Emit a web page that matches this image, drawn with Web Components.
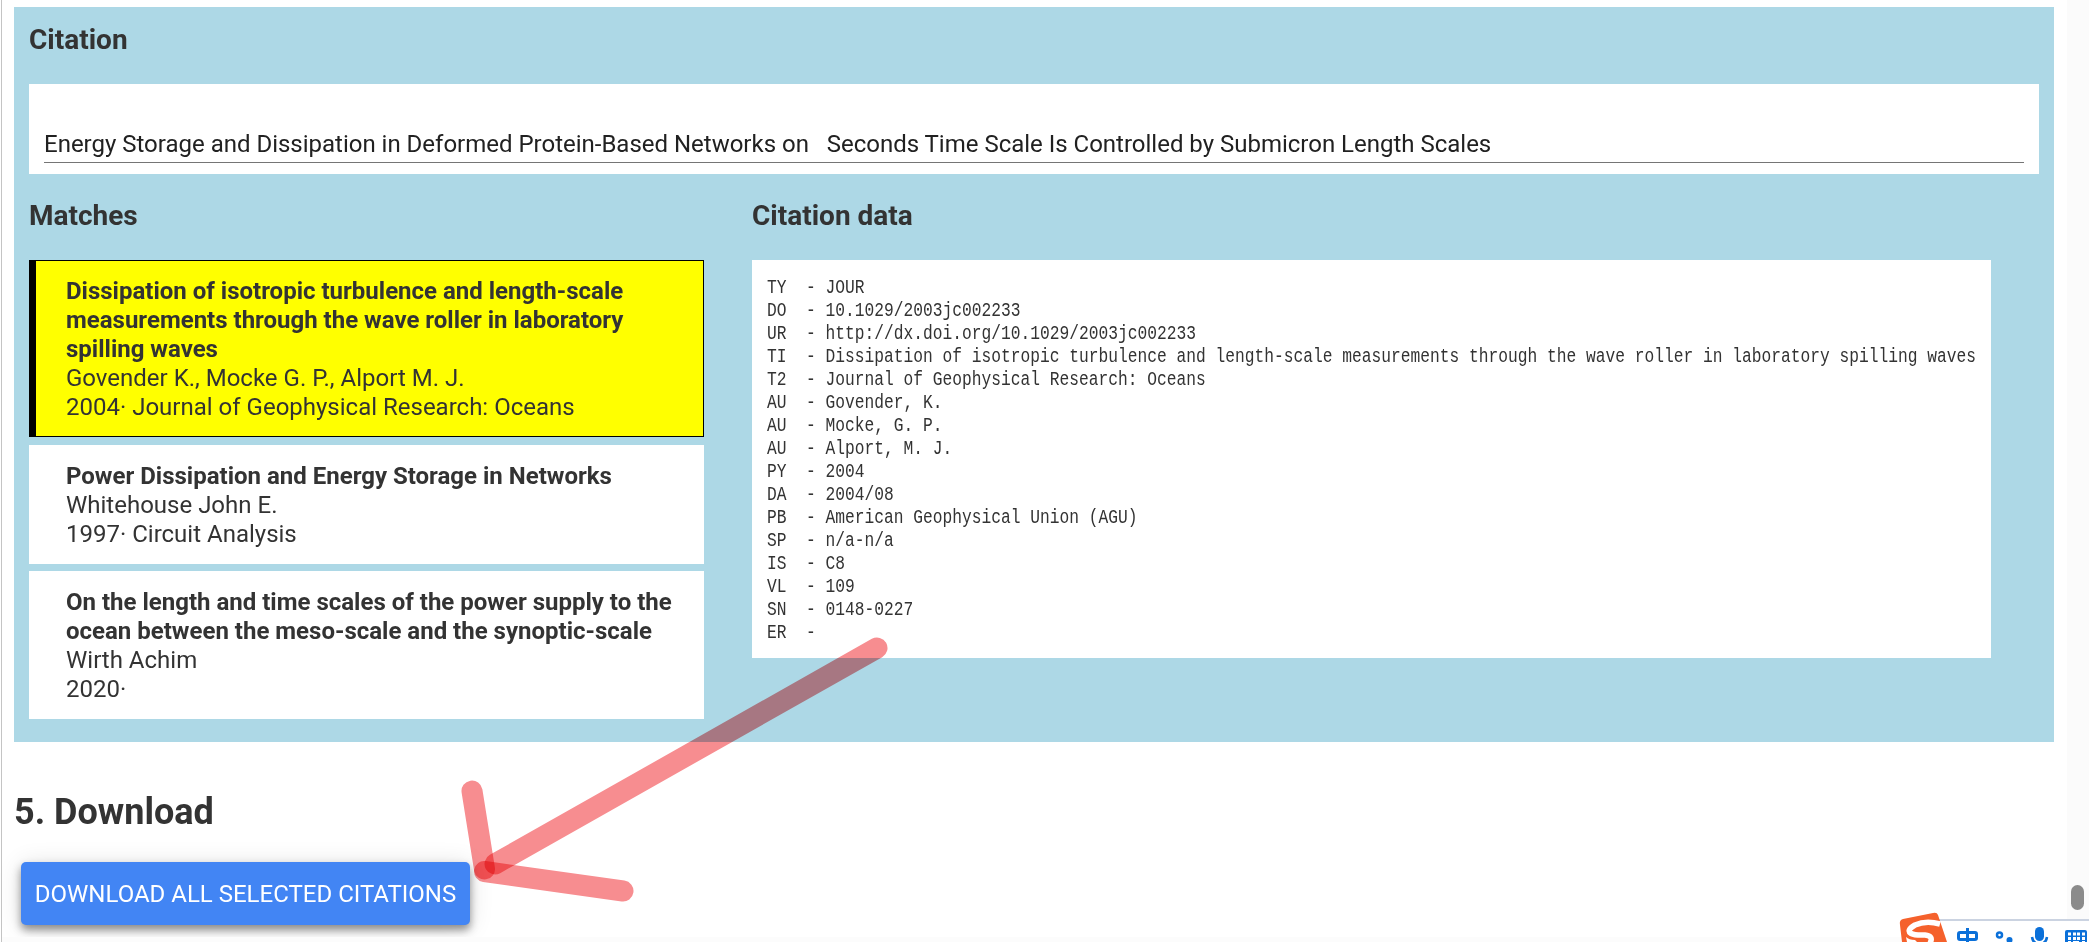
<!DOCTYPE html>
<html lang="en">
<head>
<meta charset="utf-8">
<title>Citations</title>
<style>
html,body{margin:0;height:100%;overflow:hidden;background:#fff}
body{font-family:Roboto,"Liberation Sans",sans-serif;font-size:24px;line-height:29px;color:#333}
</style>
</head>
<body>
<citation-app></citation-app>
<script>
const define = (name, html) => customElements.define(name, class extends HTMLElement {
  constructor() {
    super();
    const t = document.createElement('template');
    t.innerHTML = html;
    this.attachShadow({mode: 'open'}).append(t.content.cloneNode(true));
  }
});

define('section-title', `
<style>:host{display:block;box-sizing:border-box;padding-top:1px;font-size:28px;line-height:34px;font-weight:700}</style><slot></slot>`);

define('citation-input', `
<style>
:host{display:flex;flex-direction:column;justify-content:flex-end;box-sizing:border-box;height:90px;background:#fff;padding:0 15px 11px}
div{border-bottom:1px solid #757575;color:#212121;white-space:pre;height:33px;line-height:31px;letter-spacing:-.008px}
</style><div><slot></slot></div>`);

define('match-card', `
<style>
:host{display:block;box-sizing:border-box;background:#fff;border:1px solid #fff;border-left-width:7px;padding:16px 15px 14px 30px}
:host([selected]){background:#ff0;border-color:#000}
.title{font-weight:700}
</style>
<div class="title"><slot name="title"></slot></div>
<div><slot name="authors"></slot></div>
<div><slot name="source"></slot></div>`);

define('ris-record', `
<style>
:host{display:block;box-sizing:border-box;width:1239px;height:398px;background:#fff;padding:17px 15px 13px;overflow:hidden}
pre{margin:0;font:19.5px/23px "Liberation Mono",monospace;transform:scaleX(.8332);transform-origin:0 0;color:#333}
</style><pre><slot></slot></pre>`);

define('download-button', `
<style>
:host{display:block;margin:30px 0 0 7px;width:449px;height:63px;box-sizing:border-box;background:#4285f4;color:#fff;border-radius:5px;text-align:center;line-height:65px;white-space:nowrap;
box-shadow:0 5px 8px rgba(0,0,0,.42),0 2px 24px rgba(0,0,0,.12)}
</style><slot></slot>`);

define('arrow-mark', `
<style>
:host{display:block;position:absolute;left:450px;top:620px;width:460px;height:300px;mix-blend-mode:multiply;pointer-events:none}
svg{display:block}
line{stroke:#f78d90;stroke-width:21;stroke-linecap:round;mix-blend-mode:multiply}
</style>
<svg width="460" height="300" viewBox="450 620 460 300">
<line x1="877" y1="648" x2="495" y2="864"/>
<line x1="472" y1="791" x2="484.5" y2="869"/>
<line x1="484.5" y1="871.5" x2="623" y2="891"/>
</svg>`);

define('page-scrollbar', `
<style>
:host{display:block;position:absolute;right:0;top:0;width:22px;height:100%;background:#fbfbfb}
i{position:absolute;left:4px;top:885px;width:13px;height:25px;border-radius:7px;background:#8b8b8b}
</style><i></i>`);

define('input-toolbar', `
<style>:host{display:block;position:absolute;right:0;bottom:0;width:194px;height:40px}svg{display:block}</style>
<svg width="194" height="40" viewBox="1895 902 194 40">
<path d="M1938 919h151v23h-151z" fill="#fff"/><path d="M1938 919h151v2h-151z" fill="#cbd3e1"/>
<path d="M1903 919l30-6q4-1 5 2l9 27h-45l-2-17q-1-5 3-6z" fill="#f5612c"/>
<path d="M1940 924Q1926 920 1915 925Q1906 930 1911 933.500Q1915 935.500 1925 935Q1934 936 1930 943" fill="none" stroke="#fff" stroke-width="5.500"/>
<path d="M1906 937q3 3 9 3l2 2h-10z" fill="#fff"/>
<g fill="none" stroke="#0b70d9" stroke-width="3"><rect x="1958.500" y="932.500" width="18" height="7" rx="1.500"/><path d="M1967.500 928v14"/><circle cx="1999.500" cy="935" r="2.500" stroke-width="2.500"/><path d="M2032 937q1 7 7.500 7t7.500-7" stroke-width="2.500"/></g>
<circle cx="2009.500" cy="940" r="3" fill="#0b70d9"/><rect x="2035" y="927" width="9" height="14" rx="4.500" fill="#0b70d9"/>
<rect x="2065" y="930" width="22" height="16" rx="2" fill="#0b70d9"/>
<path d="M2068 932.500h3v3h-3zM2073 932.500h3v3h-3zM2077 932.500h3v3h-3zM2082 932.500h3v3h-3zM2068 937h3v3h-3zM2073 937h3v3h-3zM2077 937h3v3h-3zM2082 937h3v3h-3zM2068 941h3v1h-3zM2073 941h6v1h-6zM2082 941h3v1h-3z" fill="#fff"/>
</svg>`);

define('citation-app', `
<style>
:host{display:block;position:relative;box-sizing:border-box;height:942px;padding:7px 35px 0 14px;overflow:hidden;background:#fff}
:host::before{content:"";position:absolute;left:1px;top:0;width:1px;height:100%;background:#c4c4c4}
.panel{box-sizing:border-box;height:735px;background:#add8e6;padding:15px}
.panel>section-title{height:62px}
.cols{display:grid;grid-template-columns:675px 1239px;column-gap:48px;margin-top:24px}
.cols section-title{height:62px}
.list{display:flex;flex-direction:column;gap:7px}
.list match-card:first-child{margin-bottom:1px}
h2{margin:50px 0 0;font-size:36px;line-height:40px;font-weight:700}
footer{position:absolute;left:2px;right:0;bottom:0;height:5px;background:#fcfcfc}
</style>
<div class="panel">
<section-title>Citation</section-title>
<citation-input>Energy Storage and Dissipation in Deformed Protein-Based Networks on   Seconds Time Scale Is Controlled by Submicron Length Scales</citation-input>
<div class="cols">
<div><section-title>Matches</section-title>
<div class="list">
<match-card selected><span slot="title">Dissipation of isotropic turbulence and length-scale measurements through the wave roller in laboratory spilling waves</span><span slot="authors">Govender K., Mocke G. P., Alport M. J.</span><span slot="source">2004· Journal of Geophysical Research: Oceans</span></match-card>
<match-card><span slot="title">Power Dissipation and Energy Storage in Networks</span><span slot="authors">Whitehouse John E.</span><span slot="source">1997· Circuit Analysis</span></match-card>
<match-card><span slot="title">On the length and time scales of the power supply to the ocean between the meso-scale and the synoptic-scale</span><span slot="authors">Wirth Achim</span><span slot="source">2020·</span></match-card>
</div></div>
<div><section-title>Citation data</section-title>
<ris-record>TY  - JOUR
DO  - 10.1029/2003jc002233
UR  - http://dx.doi.org/10.1029/2003jc002233
TI  - Dissipation of isotropic turbulence and length-scale measurements through the wave roller in laboratory spilling waves
T2  - Journal of Geophysical Research: Oceans
AU  - Govender, K.
AU  - Mocke, G. P.
AU  - Alport, M. J.
PY  - 2004
DA  - 2004/08
PB  - American Geophysical Union (AGU)
SP  - n/a-n/a
IS  - C8
VL  - 109
SN  - 0148-0227
ER  - </ris-record></div>
</div>
</div>
<h2>5. Download</h2>
<download-button>DOWNLOAD ALL SELECTED CITATIONS</download-button>
<footer></footer>
<page-scrollbar></page-scrollbar>
<input-toolbar></input-toolbar>
<arrow-mark></arrow-mark>`);
</script>
</body>
</html>
